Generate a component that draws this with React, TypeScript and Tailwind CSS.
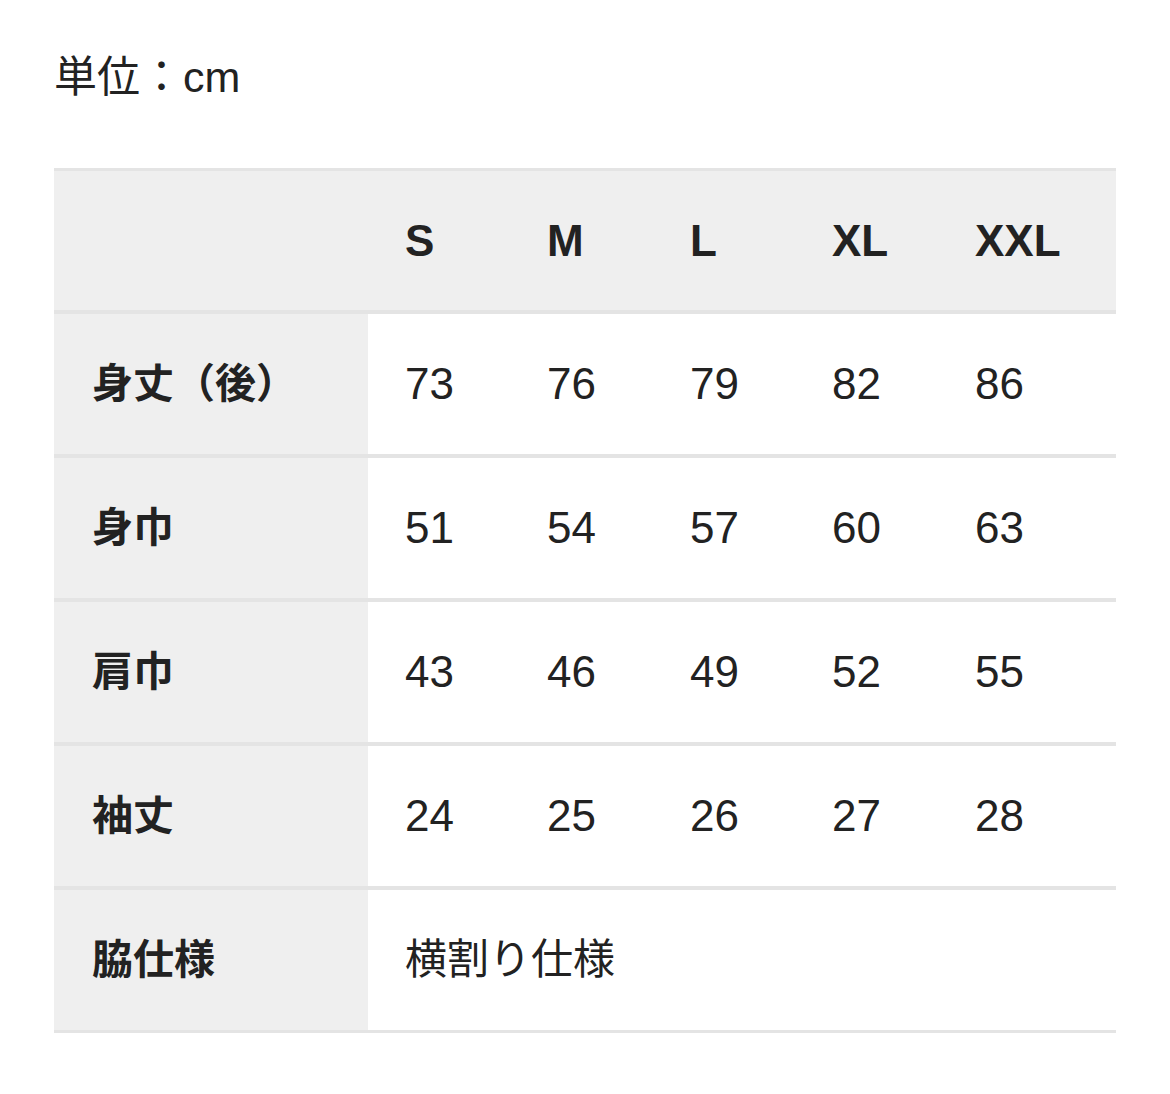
import React from "react";

const sizes = ["S", "M", "L", "XL", "XXL"];
const rows: { label: string; values?: string[]; text?: string }[] = [
  { label: "身丈（後）", values: ["73", "76", "79", "82", "86"] },
  { label: "身巾", values: ["51", "54", "57", "60", "63"] },
  { label: "肩巾", values: ["43", "46", "49", "52", "55"] },
  { label: "袖丈", values: ["24", "25", "26", "27", "28"] },
  { label: "脇仕様", text: "横割り仕様" },
];

const colW = ["w-[142px]", "w-[143px]", "w-[142px]", "w-[143px]", "flex-1"];

export default function App() {
  return (
    <div
      className="w-[1170px] h-[1094px] bg-white text-[#222222] px-[54px]"
      style={{ fontFamily: '"Liberation Sans", "Noto Sans CJK JP", sans-serif' }}
    >
      <div className="pt-[55px] h-[168px]">
        <div className="text-[43px] leading-[44px]">単位：cm</div>
      </div>
      <div className="border-t-[3px] border-[#e4e4e4]">
        <div className="flex h-[143px] bg-[#efefef] border-b-[4px] border-[#e4e4e4]">
          <div className="w-[314px]" />
          {sizes.map((s, i) => (
            <div key={s} className={`${colW[i]} flex items-center pl-[37px] text-[44px] font-bold leading-none`}>
              {s}
            </div>
          ))}
        </div>
        {rows.map((r, ri) => (
          <div
            key={r.label}
            className={`flex ${ri === rows.length - 1 ? "h-[143px] border-b-[3px]" : "h-[144px] border-b-[4px]"} border-[#e4e4e4]`}
          >
            <div className="w-[314px] bg-[#efefef] flex items-center pl-[38px] text-[41px] font-bold leading-none">
              {r.label}
            </div>
            {r.values ? (
              r.values.map((v, i) => (
                <div key={i} className={`${colW[i]} flex items-center pl-[37px] text-[44px] leading-none`}>
                  {v}
                </div>
              ))
            ) : (
              <div className="flex-1 flex items-center pl-[37px] text-[42px] leading-none">{r.text}</div>
            )}
          </div>
        ))}
      </div>
    </div>
  );
}
